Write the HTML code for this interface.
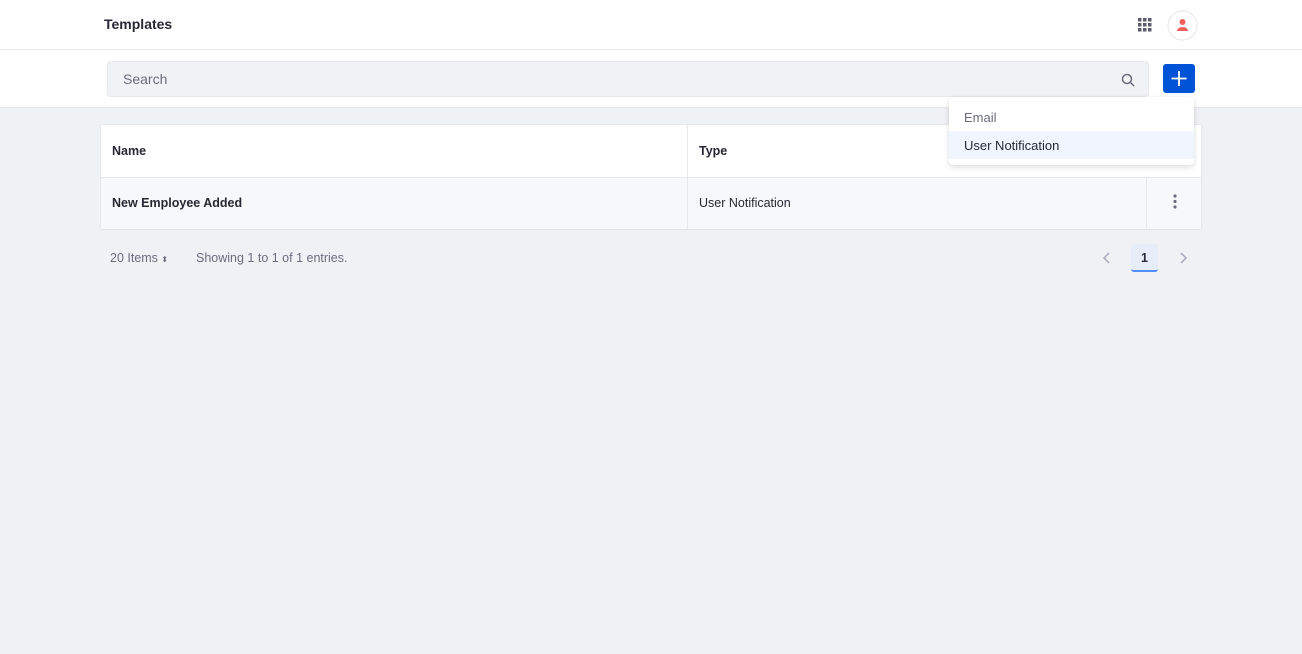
<!DOCTYPE html>
<html><head><style>
*{box-sizing:border-box;margin:0;padding:0}
body{width:1302px;height:654px;background:#f0f1f5;font-family:"Liberation Sans",sans-serif;font-size:13px;color:#272833;position:relative;overflow:hidden}
.top{position:absolute;left:0;top:0;width:1302px;height:50px;background:#fff;border-bottom:1px solid #e7e7ed}
.top .t{position:absolute;left:104px;top:16px;font-weight:bold;font-size:14px}
.sub{position:absolute;left:0;top:50px;width:1302px;height:58px;background:#fff;border-bottom:1px solid #e7e7ed}
.search{position:absolute;left:107px;top:61px;width:1042px;height:36px;background:#f1f2f5;border:1px solid #e7e7ed;border-radius:4px}
.search span{position:absolute;left:15px;top:9px;color:#6b6c7e;font-size:14px}
.plus{position:absolute;left:1163px;top:64px;width:32px;height:29px;border-radius:3px;background:#0053d6}
.table{position:absolute;left:100px;top:124px;width:1102px;height:105px;background:#fff;border:1px solid #e7e7ed;border-radius:3px;box-shadow:0 1px 1px rgba(0,0,0,.06)}
.row2{position:absolute;left:0;top:52px;width:100%;height:52px;background:#f7f8f9;border-top:1px solid #e7e7ed}
.vl{position:absolute;top:0;width:1px;background:#e7e7ed}
.cell{position:absolute;font-size:12.5px}
.dd{position:absolute;left:949px;top:97px;width:245px;height:68px;background:#fff;border-radius:4px;box-shadow:0 2px 6px rgba(0,0,0,.15)}
.dd .a{position:absolute;left:15px;top:13px;color:#6b6c7e}
.dd .b{position:absolute;left:0;top:34px;width:245px;height:28px;background:#f0f5ff;padding:7px 15px}
.foot{position:absolute;top:251px;color:#6b6c7e;font-size:12.5px}
</style></head><body>
<div class="top"><div class="t">Templates</div>
<svg style="position:absolute;left:1138px;top:18px" width="14" height="14"><g fill="#5b5c6e"><rect x="0" y="0" width="3.5" height="3.5"/><rect x="5" y="0" width="3.5" height="3.5"/><rect x="10" y="0" width="3.5" height="3.5"/><rect x="0" y="5" width="3.5" height="3.5"/><rect x="5" y="5" width="3.5" height="3.5"/><rect x="10" y="5" width="3.5" height="3.5"/><rect x="0" y="10" width="3.5" height="3.5"/><rect x="5" y="10" width="3.5" height="3.5"/><rect x="10" y="10" width="3.5" height="3.5"/></g></svg>
<svg style="position:absolute;left:1167px;top:10px" width="31" height="31"><circle cx="15.5" cy="15.5" r="14.5" fill="#fff" stroke="#e7e7ed"/><circle cx="15.5" cy="12" r="3" fill="#f0605a"/><path d="M10 21a5.5 4 0 0 1 11 0z" fill="#f0605a"/></svg>
</div>
<div class="sub"></div>
<div class="search"><span>Search</span>
<svg style="position:absolute;left:1013px;top:11px" width="14" height="14"><circle cx="6" cy="6" r="4.5" fill="none" stroke="#6b6c7e" stroke-width="1.5"/><path d="M9.5 9.5L13 13" stroke="#6b6c7e" stroke-width="1.5"/></svg></div>
<div class="plus"><svg width="32" height="29"><path d="M16 7v15M8.5 14.5h15" stroke="#fff" stroke-width="1.8"/></svg></div>
<div class="table">
<div class="row2"></div>
<div class="vl" style="left:586px;height:104px"></div>
<div class="vl" style="left:1045px;top:52px;height:52px"></div>
<div class="cell" style="left:11px;top:19px;font-weight:bold">Name</div>
<div class="cell" style="left:598px;top:19px;font-weight:bold">Type</div>
<div class="cell" style="left:11px;top:71px;font-weight:bold">New Employee Added</div>
<div class="cell" style="left:598px;top:71px">User Notification</div>
<svg style="position:absolute;left:1070px;top:69px" width="8" height="16"><g fill="#6b6c7e"><circle cx="4" cy="2" r="1.6"/><circle cx="4" cy="7.5" r="1.6"/><circle cx="4" cy="13" r="1.6"/></g></svg>
</div>
<div class="dd"><div class="a">Email</div><div class="b">User Notification</div></div>
<div class="foot" style="left:110px">20 Items <span style="font-size:8px">⬍</span></div>
<div class="foot" style="left:196px">Showing 1 to 1 of 1 entries.</div>
<svg style="position:absolute;left:1102px;top:252px" width="10" height="12"><path d="M7 1L2 6l5 5" fill="none" stroke="#a7a9bc" stroke-width="1.5"/></svg>
<div style="position:absolute;left:1131px;top:244px;width:27px;height:28px;background:#e6edf8;border-radius:3px;border-bottom:2px solid #528eff;text-align:center;padding-top:7px;font-weight:bold;font-size:12.5px">1</div>
<svg style="position:absolute;left:1178px;top:252px" width="10" height="12"><path d="M3 1l5 5-5 5" fill="none" stroke="#a7a9bc" stroke-width="1.5"/></svg>
</body></html>
